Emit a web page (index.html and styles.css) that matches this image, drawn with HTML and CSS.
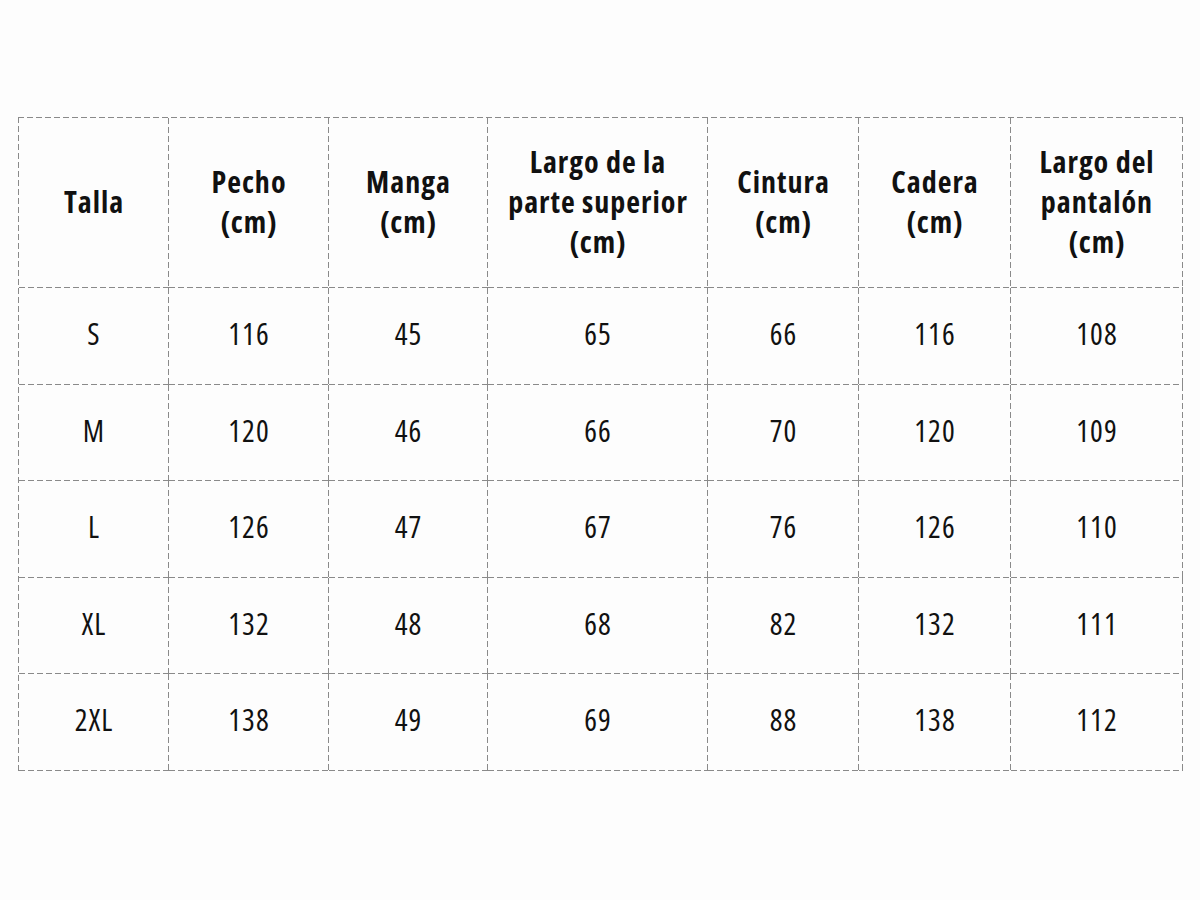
FILE: index.html
```html
<!DOCTYPE html>
<html lang="es">
<head>
<meta charset="utf-8">
<title>Tabla de tallas</title>
<link rel="stylesheet" href="styles.css">
</head>
<body>
<div class="page">
  <div class="sizes">
    <div class="cell head">Talla</div>
    <div class="cell head">Pecho<br>(cm)</div>
    <div class="cell head">Manga<br>(cm)</div>
    <div class="cell head">Largo de la<br>parte superior<br>(cm)</div>
    <div class="cell head">Cintura<br>(cm)</div>
    <div class="cell head">Cadera<br>(cm)</div>
    <div class="cell head">Largo del<br>pantalón<br>(cm)</div>

    <div class="cell">S</div><div class="cell">116</div><div class="cell">45</div><div class="cell">65</div><div class="cell">66</div><div class="cell">116</div><div class="cell">108</div>
    <div class="cell">M</div><div class="cell">120</div><div class="cell">46</div><div class="cell">66</div><div class="cell">70</div><div class="cell">120</div><div class="cell">109</div>
    <div class="cell">L</div><div class="cell">126</div><div class="cell">47</div><div class="cell">67</div><div class="cell">76</div><div class="cell">126</div><div class="cell">110</div>
    <div class="cell">XL</div><div class="cell">132</div><div class="cell">48</div><div class="cell">68</div><div class="cell">82</div><div class="cell">132</div><div class="cell">111</div>
    <div class="cell">2XL</div><div class="cell">138</div><div class="cell">49</div><div class="cell">69</div><div class="cell">88</div><div class="cell">138</div><div class="cell">112</div>
  </div>
</div>
</body>
</html>
```
FILE: styles.css
```css
html, body {
  margin: 0;
  padding: 0;
  background: #fdfdfd;
}
.page {
  padding: 117px 18px 0 18px;
}
.sizes {
  display: grid;
  grid-template-columns: 150px 160px 159px 220px 151px 152px 172px;
  grid-template-rows: 170px repeat(5, 96.5px);
  padding: 1px 0 0 1px;
  width: 1165px;
  box-sizing: border-box;
  background:
    linear-gradient(to right, #8a8a8a 6px, transparent 6px) top left / 9px 1px repeat-x,
    linear-gradient(to bottom, #8a8a8a 6px, transparent 6px) top left / 1px 9px repeat-y;
  font-family: "Open Sans", sans-serif;
  font-stretch: 75%;
  font-weight: 380;
  letter-spacing: 1px;
  color: #111;
  font-size: 30px;
}
.cell {
  display: flex;
  align-items: center;
  justify-content: center;
  text-align: center;
  line-height: 40px;
  padding-bottom: 4px;
  background:
    linear-gradient(to right, #8a8a8a 6px, transparent 6px) bottom left / 9px 1px repeat-x,
    linear-gradient(to bottom, #8a8a8a 6px, transparent 6px) top right / 1px 9px repeat-y;
}
.head {
  font-weight: bold;
  padding-bottom: 3px;
}
```
